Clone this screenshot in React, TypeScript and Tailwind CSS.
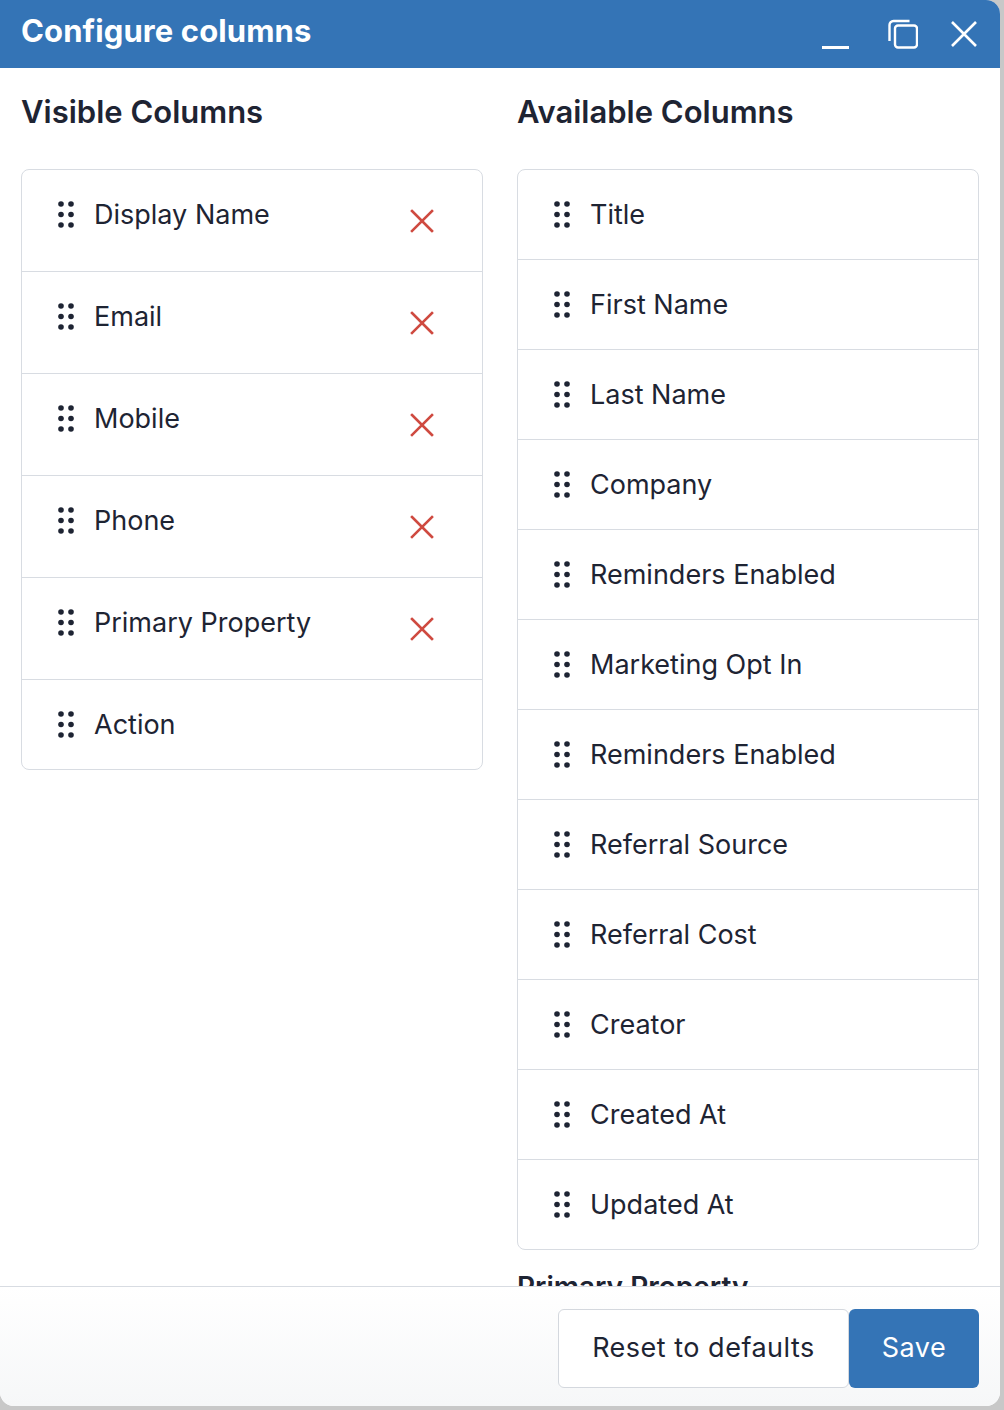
import React from "react";

const visible = ["Display Name", "Email", "Mobile", "Phone", "Primary Property", "Action"];
const available = [
  "Title",
  "First Name",
  "Last Name",
  "Company",
  "Reminders Enabled",
  "Marketing Opt In",
  "Reminders Enabled",
  "Referral Source",
  "Referral Cost",
  "Creator",
  "Created At",
  "Updated At",
];

const DragHandle: React.FC = () => (
  <svg viewBox="0 0 16 27" className="h-[27px] w-4 shrink-0 fill-[#1e2433]">
    <circle cx="3" cy="3" r="2.8" />
    <circle cx="13" cy="3" r="2.8" />
    <circle cx="3" cy="13.5" r="2.8" />
    <circle cx="13" cy="13.5" r="2.8" />
    <circle cx="3" cy="24" r="2.8" />
    <circle cx="13" cy="24" r="2.8" />
  </svg>
);

const RemoveIcon: React.FC = () => (
  <svg viewBox="0 0 24 24" className="h-6 w-6 stroke-[#cf4a40]" fill="none" strokeWidth="2.6" strokeLinecap="square">
    <path d="M2 2l20 20M22 2L2 22" />
  </svg>
);

const Row: React.FC<{ label: string; removable?: boolean }> = ({ label, removable }) => (
  <div className="flex items-start border-b border-[#d8dce2] py-[29px] pl-[36px] pr-[39px] last:border-b-0">
    <div className="flex h-[31px] items-center">
      <DragHandle />
    </div>
    <span className="ml-5 text-[27px] leading-[31px] text-[#1e2433]">{label}</span>
    {removable && (
      <button className="ml-auto flex h-[43px] w-[43px] items-center justify-center">
        <RemoveIcon />
      </button>
    )}
  </div>
);

export default function App() {
  return (
    <div className="h-[1410px] w-[1004px] bg-[#c8c8c8]" style={{ fontFamily: "Inter, 'Noto Sans', sans-serif" }}>
      <div className="flex h-[1406px] w-[1000px] flex-col overflow-hidden rounded-tr-[14px] rounded-b-[14px] bg-white">
        <div className="flex h-[68px] shrink-0 items-center bg-[#3474b6] pl-[21px] pr-[23px] text-white">
          <h1 className="pb-[6px] text-[31px] font-bold tracking-[0.1px]">Configure columns</h1>
          <div className="ml-auto flex items-center">
            <svg viewBox="0 0 28 28" className="mt-[8px] h-7 w-7" fill="none" stroke="white" strokeWidth="3">
              <path d="M0 23.5h27" />
            </svg>
            <svg viewBox="0 0 30 30" className="ml-[38px] h-[30px] w-[30px]" fill="none" stroke="white" strokeWidth="2.4">
              <rect x="7" y="6.5" width="22" height="22" rx="3" />
              <path d="M1.5 22V6a4 4 0 014-4h16" />
            </svg>
            <svg viewBox="0 0 26 26" className="ml-[33px] h-[26px] w-[26px]" fill="none" stroke="white" strokeWidth="2.6">
              <path d="M1 1l24 24M25 1L1 25" />
            </svg>
          </div>
        </div>

        <div className="min-h-0 flex-1 overflow-hidden px-[21px] pt-[26px]">
          <div className="grid grid-cols-2 gap-x-[34px]">
            <div>
              <h2 className="text-[31px] font-semibold leading-[36px] text-[#1e2433]">Visible Columns</h2>
              <div className="mt-[39px] rounded-[8px] border border-[#d8dce2]">
                {visible.map((c) => (
                  <Row key={c} label={c} removable={c !== "Action"} />
                ))}
              </div>
            </div>
            <div>
              <h2 className="text-[31px] font-semibold leading-[36px] text-[#1e2433]">Available Columns</h2>
              <div className="mt-[39px] rounded-[8px] border border-[#d8dce2]">
                {available.map((c, i) => (
                  <Row key={i} label={c} />
                ))}
              </div>
              <h3 className="mt-[20px] text-[28px] font-semibold leading-[34px] text-[#1e2433]">Primary Property</h3>
            </div>
          </div>
        </div>

        <div className="flex h-[120px] shrink-0 justify-end border-t border-[#d8dce2] bg-linear-to-b from-white to-[#f6f7f8] pr-[21px] pt-[22px]">
          <button className="h-[79px] w-[291px] rounded-[6px] border border-[#d4d8de] bg-white text-[27px] tracking-[0.5px] text-[#1e2433]">
            Reset to defaults
          </button>
          <button className="h-[79px] w-[130px] rounded-[6px] bg-[#3474b6] text-[27px] tracking-[0.5px] text-white">Save</button>
        </div>
      </div>
    </div>
  );
}
